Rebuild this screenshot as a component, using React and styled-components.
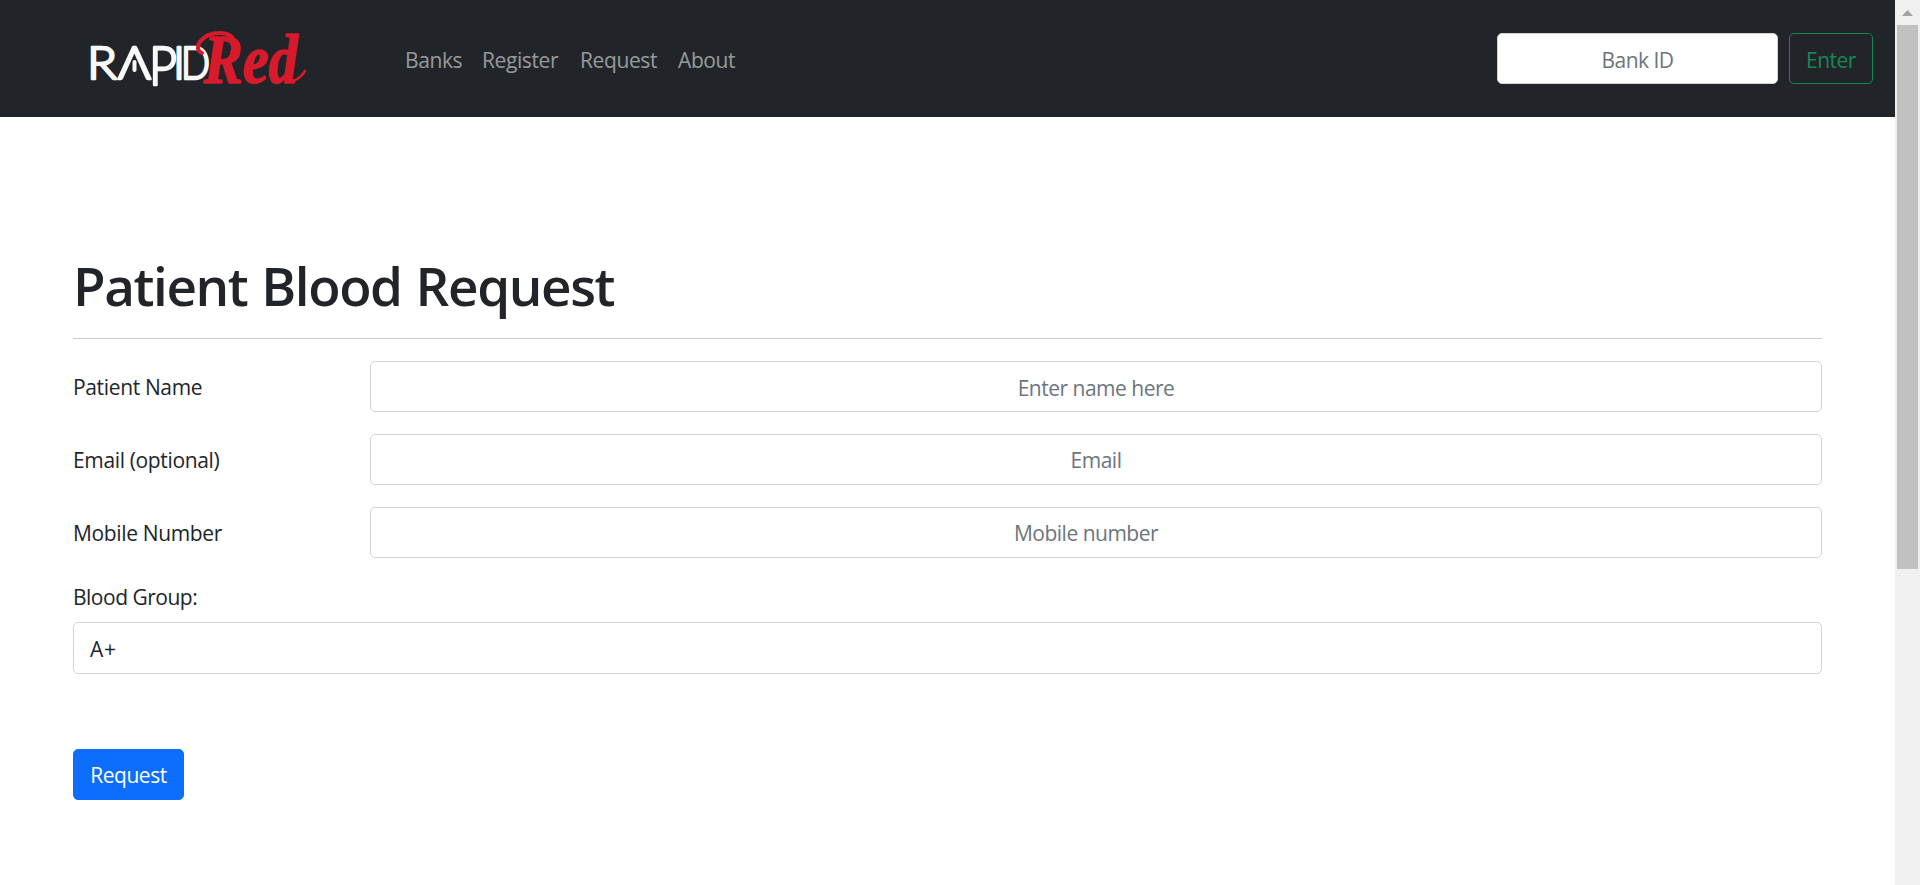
import React from 'react'
import styled, { createGlobalStyle } from 'styled-components'

const navLinks = [
  { page: 'Banks', width: 55 },
  { page: 'Register', width: 76 },
  { page: 'Request', width: 76 },
  { page: 'About', width: 60 },
]

const fields = [
  { label: 'Patient Name', type: 'text', placeholder: 'Enter name here', drop: 3 },
  { label: 'Email (optional)', type: 'email', placeholder: 'Email', drop: 0 },
  { label: 'Mobile Number', type: 'text', placeholder: 'Mobile number', drop: 0, spinner: true },
]

const Logo = () => (
  <LogoSvg viewBox="0 0 230 64" role="img" aria-label="Rapid Red">
    <g className="rapid">
      <text x="1" y="52" textLength="30" lengthAdjust="spacingAndGlyphs">R</text>
      <text x="32" y="52" textLength="33" lengthAdjust="spacingAndGlyphs">Λ</text>
      <text className="tall" x="63" y="58" textLength="28" lengthAdjust="spacingAndGlyphs">P</text>
      <text x="87" y="52">I</text>
      <text x="95" y="52" textLength="29" lengthAdjust="spacingAndGlyphs">D</text>
      <path d="M48.5 35V43" />
    </g>
    <g className="red">
      <text x="118" y="56" textLength="94" lengthAdjust="spacingAndGlyphs">Red</text>
      <path d="M116 26C106 22 115 6 134 6C147 6 152 15 146 25" />
      <path className="tail" d="M203 54C210 55 216 49 219 44" />
    </g>
  </LogoSvg>
)

const App = () => {
  return (
    <>
      <GlobalStyle />
      <Screen>
        <Page>
          <Navbar>
            <Logo />
            <NavList>
              {navLinks.map((item, index) => (
                <NavLink key={index} href="#" $width={item.width}>
                  {item.page}
                </NavLink>
              ))}
            </NavList>
            <BankForm>
              <BankInput placeholder="Bank ID" />
              <EnterButton type="button">Enter</EnterButton>
            </BankForm>
          </Navbar>
          <Main>
            <Title>Patient Blood Request</Title>
            <Divider />
            {fields.map((field, index) => (
              <Row key={index}>
                <Label>{field.label}</Label>
                <Input
                  type={field.type}
                  placeholder={field.placeholder}
                  $drop={field.drop}
                  $spinner={field.spinner}
                />
              </Row>
            ))}
            <GroupLabel>Blood Group:</GroupLabel>
            <Select defaultValue="A+">
              <option>A+</option>
              <option>A-</option>
              <option>B+</option>
              <option>B-</option>
            </Select>
            <RequestButton type="button">Request</RequestButton>
          </Main>
        </Page>
        <Scrollbar>
          <svg width="25" height="25" viewBox="0 0 25 25">
            <path d="M7 16L12.5 10L18 16Z" fill="#a3a3a3" />
          </svg>
          <Thumb />
        </Scrollbar>
      </Screen>
    </>
  )
}

const GlobalStyle = createGlobalStyle`
  * {
    box-sizing: border-box;
  }
  body {
    margin: 0;
    overflow: hidden;
    background: #fff;
    color: #212529;
    font-family: "Open Sans", "Noto Sans", sans-serif;
    font-size: 21px;
    line-height: 33px;
    letter-spacing: -0.5px;
  }
  input, select, button {
    font: inherit;
    letter-spacing: inherit;
  }
`
const Screen = styled.div`
  display: flex;
  height: 885px;
`
const Page = styled.div`
  flex: 1;
`
const Navbar = styled.nav`
  display: flex;
  align-items: center;
  height: 117px;
  padding: 0 22px 0 86px;
  background: #212529;
`
const LogoSvg = styled.svg`
  width: 230px;
  height: 64px;
  margin-right: 89px;
  overflow: visible;
  letter-spacing: 0;
  .rapid text {
    font: 300 46px "Lato", sans-serif;
    fill: #f8f8f8;
    stroke: #f8f8f8;
    stroke-width: 2.6;
    stroke-linejoin: round;
  }
  .rapid .tall {
    font-size: 54px;
  }
  .rapid path {
    stroke: #f8f8f8;
    stroke-width: 4;
    stroke-linecap: round;
  }
  .red text {
    font: italic 700 70px "Liberation Serif", serif;
    fill: #d81b2c;
    stroke: #d81b2c;
    stroke-width: 1.6;
    stroke-linejoin: round;
  }
  .red path {
    fill: none;
    stroke: #d81b2c;
    stroke-width: 4;
    stroke-linecap: round;
  }
  .red .tail {
    stroke-width: 2.5;
  }
`
const NavList = styled.div`
  display: flex;
  gap: 22px;
  padding-top: 4px;
`
const NavLink = styled.a`
  width: ${({ $width }) => $width}px;
  color: rgba(255, 255, 255, 0.55);
  letter-spacing: -0.4px;
  text-decoration: none;
  white-space: nowrap;
`
const BankForm = styled.form`
  display: flex;
  gap: 11px;
  margin-left: auto;
`
const Control = styled.input`
  height: 51px;
  padding: 0 16px;
  border: 1px solid #ced4da;
  border-radius: 5px;
  background: #fff;
  color: #212529;
  text-align: center;
  &::placeholder {
    color: #6c757d;
    opacity: 1;
  }
`
const BankInput = styled(Control)`
  width: 281px;
  padding-top: 2px;
`
const Button = styled.button`
  height: 51px;
  padding: 1px 0 0;
  border: 1px solid;
  border-radius: 5px;
`
const EnterButton = styled(Button)`
  width: 84px;
  padding-top: 3px;
  border-color: #198754;
  background: transparent;
  color: #198754;
`
const Main = styled.main`
  padding: 136px 73px 0;
`
const Title = styled.h1`
  margin: 0;
  font-size: 53px;
  font-weight: 600;
  line-height: 66px;
  letter-spacing: -1.4px;
  word-spacing: 1.5px;
`
const Divider = styled.hr`
  height: 1px;
  margin: 19px 0 22px;
  border: 0;
  background: #c8c9ca;
`
const Row = styled.div`
  display: grid;
  grid-template-columns: 297px 1fr;
  align-items: center;
  margin-bottom: 22px;
`
const Label = styled.label`
  padding-top: 2px;
  letter-spacing: -0.35px;
`
const Input = styled(Control)`
  width: 100%;
  padding: ${({ $drop }) => $drop}px ${({ $spinner }) => ($spinner ? 36 : 16)}px 0 16px;
`
const GroupLabel = styled.label`
  display: block;
  height: 42px;
  padding-top: 1px;
`
const Select = styled.select`
  display: block;
  width: 100%;
  height: 52px;
  padding: 2px 16px 0;
  border: 1px solid #ced4da;
  border-radius: 5px;
  background: #fff;
  color: #212529;
  letter-spacing: 0.6px;
  appearance: none;
`
const RequestButton = styled(Button)`
  width: 111px;
  margin-top: 75px;
  border-color: #0d6efd;
  background: #0d6efd;
  color: #fff;
`
const Scrollbar = styled.div`
  width: 25px;
  background: #f0f0f0;
  svg {
    display: block;
  }
`
const Thumb = styled.div`
  width: 21px;
  height: 544px;
  margin-left: 2px;
  background: #c1c1c1;
`

export default App
